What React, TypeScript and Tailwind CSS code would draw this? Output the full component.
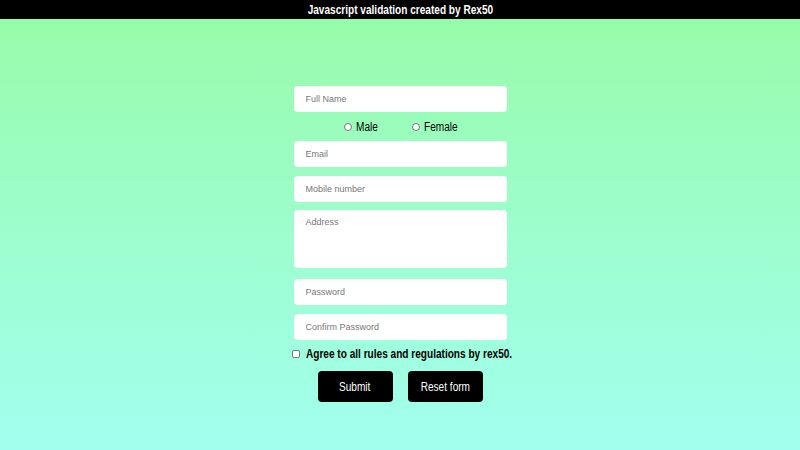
export default function App() {
	const field =
		"block w-full h-[26px] rounded-[4px] bg-white px-[12px] text-[9px] text-black placeholder:text-[#777] outline-none";
	const squeeze = "inline-block scale-x-[0.84]";

	return (
		<div
			className="w-full h-[450px] overflow-hidden bg-gradient-to-b from-[#98fba6] to-[#a2ffef]"
			style={{ fontFamily: '"Liberation Sans", Arial, sans-serif' }}
		>
			<div className="h-[19px] bg-black text-white text-[12px] font-bold flex items-center justify-center whitespace-nowrap">
				<span className={squeeze}>Javascript validation created by Rex50</span>
			</div>

			<form className="w-[213px] mx-auto pt-[67px]">
				<input className={field} placeholder="Full Name" />

				<div className="flex justify-center items-center gap-[33px] h-[29px] text-[12px] text-black">
					<label className="flex items-center gap-[4px]">
						<span className="shrink-0 w-[8px] h-[8px] rounded-full bg-white border border-[#777]" />
						<span className={`${squeeze} origin-left w-[23px]`}>Male</span>
					</label>
					<label className="flex items-center gap-[4px]">
						<span className="shrink-0 w-[8px] h-[8px] rounded-full bg-white border border-[#777]" />
						<span className={`${squeeze} origin-left w-[33px]`}>Female</span>
					</label>
				</div>

				<input className={field} placeholder="Email" />
				<input className={`${field} mt-[9px]`} placeholder="Mobile number" />
				<textarea
					className="block w-full h-[58px] mt-[8px] rounded-[4px] bg-white px-[12px] py-[6px] text-[9px] placeholder:text-[#777] outline-none resize-none"
					placeholder="Address"
				/>
				<input className={`${field} mt-[11px]`} placeholder="Password" />
				<input className={`${field} mt-[9px]`} placeholder="Confirm Password" />

				<label className="flex items-center gap-[6px] -ml-[2px] mt-[9px] h-[9px] text-[12px] font-bold text-black whitespace-nowrap">
					<span className="shrink-0 w-[8px] h-[8px] rounded-[2px] bg-white border border-[#777]" />
					<span className={`${squeeze} origin-left`}>Agree to all rules and regulations by rex50.</span>
				</label>

				<div className="flex justify-center gap-[15px] mt-[13px]">
					<button type="button" className="w-[75px] h-[31px] rounded-[4px] bg-black text-white text-[12px]">
						<span className={squeeze}>Submit</span>
					</button>
					<button type="button" className="w-[75px] h-[31px] rounded-[4px] bg-black text-white text-[12px]">
						<span className={squeeze}>Reset form</span>
					</button>
				</div>
			</form>
		</div>
	);
}
